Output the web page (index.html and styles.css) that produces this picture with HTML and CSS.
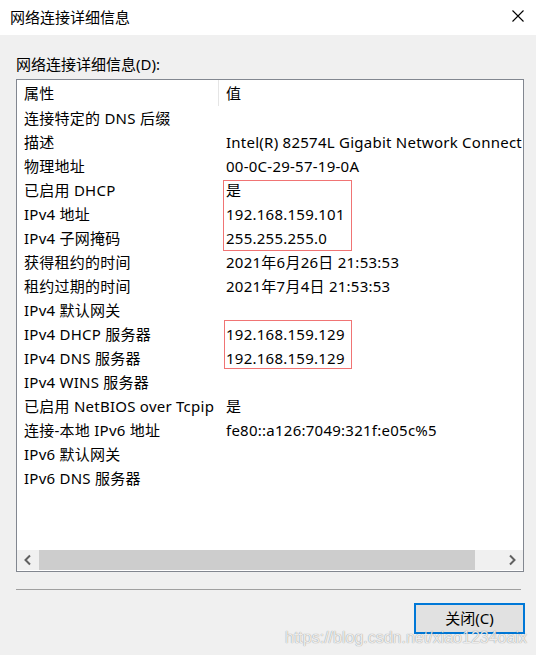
FILE: index.html
```html
<!DOCTYPE html>
<html lang="zh-CN">
<head>
<meta charset="utf-8">
<title>网络连接详细信息</title>
<link rel="stylesheet" href="styles.css">
</head>
<body>
<div class="window">
  <div class="titlebar">
    <span class="title">网络连接详细信息</span>
    <svg class="close" width="12" height="12" viewBox="0 0 12 12"><path d="M0.5 0.5 L11.5 11.5 M11.5 0.5 L0.5 11.5" stroke="#000" stroke-width="1.1" fill="none"/></svg>
  </div>
  <div class="content">
    <div class="label">网络连接详细信息(D):</div>
    <div class="listview">
      <div class="list">
        <div class="row header"><div class="c1">属性</div><div class="c2">值</div></div>
        <div class="row"><div class="c1">连接特定的 DNS 后缀</div><div class="c2"></div></div>
        <div class="row"><div class="c1">描述</div><div class="c2">Intel(R) 82574L Gigabit Network Connect</div></div>
        <div class="row"><div class="c1">物理地址</div><div class="c2">00-0C-29-57-19-0A</div></div>
        <div class="row"><div class="c1">已启用 DHCP</div><div class="c2">是</div></div>
        <div class="row"><div class="c1">IPv4 地址</div><div class="c2">192.168.159.101</div></div>
        <div class="row"><div class="c1">IPv4 子网掩码</div><div class="c2">255.255.255.0</div></div>
        <div class="row"><div class="c1">获得租约的时间</div><div class="c2">2021年6月26日 21:53:53</div></div>
        <div class="row"><div class="c1">租约过期的时间</div><div class="c2">2021年7月4日 21:53:53</div></div>
        <div class="row"><div class="c1">IPv4 默认网关</div><div class="c2"></div></div>
        <div class="row"><div class="c1">IPv4 DHCP 服务器</div><div class="c2">192.168.159.129</div></div>
        <div class="row"><div class="c1">IPv4 DNS 服务器</div><div class="c2">192.168.159.129</div></div>
        <div class="row"><div class="c1">IPv4 WINS 服务器</div><div class="c2"></div></div>
        <div class="row"><div class="c1">已启用 NetBIOS over Tcpip</div><div class="c2">是</div></div>
        <div class="row"><div class="c1">连接-本地 IPv6 地址</div><div class="c2">fe80::a126:7049:321f:e05c%5</div></div>
        <div class="row"><div class="c1">IPv6 默认网关</div><div class="c2"></div></div>
        <div class="row"><div class="c1">IPv6 DNS 服务器</div><div class="c2"></div></div>
      </div>
      <div class="hscroll">
        <div class="sbtn"><svg width="10" height="12" viewBox="0 0 10 12"><path d="M7 1.5 L2.5 6 L7 10.5" stroke="#606060" stroke-width="2" fill="none"/></svg></div>
        <div class="thumb"></div>
        <div class="track"></div>
        <div class="sbtn"><svg width="10" height="12" viewBox="0 0 10 12"><path d="M3 1.5 L7.5 6 L3 10.5" stroke="#606060" stroke-width="2" fill="none"/></svg></div>
      </div>
      <div class="mark mark1"></div>
      <div class="mark mark2"></div>
    </div>
    <div class="sep"></div>
    <div class="buttons"><button class="btn">关闭(C)</button></div>
  </div>
  <div class="watermark">https://blog.csdn.net/xiao1234oaix</div>
</div>
</body>
</html>
```

FILE: styles.css
```css
html, body {
  margin: 0;
  padding: 0;
  background: #f0f0f0;
}
.window {
  position: relative;
  width: 536px;
  height: 655px;
  background: #f0f0f0;
  font-family: "Noto Sans", "Noto Sans CJK SC", sans-serif;
  font-size: 15px;
  color: #000;
  overflow: hidden;
}
.titlebar {
  height: 35px;
  background: #fff;
  display: flex;
  align-items: center;
  justify-content: space-between;
  padding: 0 12px 0 10px;
  box-sizing: border-box;
}
.title {
  font-size: 15px;
  line-height: 20px;
  margin-top: -2px;
}
.close {
  display: block;
  margin-top: -3px;
}
.content {
  padding: 19px 12px 0 16px;
}
.label {
  line-height: 20px;
  height: 20px;
  margin-bottom: 5px;
}
.listview {
  position: relative;
  height: 493px;
  box-sizing: border-box;
  border: 1px solid #828790;
  background: #fff;
  display: flex;
  flex-direction: column;
  overflow: hidden;
}
.list {
  flex: 1;
  overflow: hidden;
  letter-spacing: 0.25px;
}
.row {
  display: flex;
  height: 24px;
  line-height: 24px;
  white-space: nowrap;
}
.row.header {
  height: 26px;
  line-height: 26px;
}
.c1 {
  width: 194px;
  flex: none;
  padding-left: 7px;
}
.c2 {
  padding-left: 8px;
  flex: none;
}
.header .c2 {
  border-left: 1px solid #e5e5e5;
  padding-left: 7px;
}
.hscroll {
  height: 20px;
  flex: none;
  display: flex;
  background: #f0f0f0;
  margin-bottom: 1px;
}
.sbtn {
  width: 22px;
  flex: none;
  display: flex;
  align-items: center;
  justify-content: center;
}
.thumb {
  width: 436px;
  flex: none;
  background: #cdcdcd;
}
.track {
  flex: 1;
}
.mark {
  position: absolute;
  border: 1px solid #f07474;
  box-sizing: border-box;
}
.mark1 {
  left: 206px;
  top: 100px;
  width: 129px;
  height: 71px;
}
.mark2 {
  left: 207px;
  top: 240px;
  width: 128px;
  height: 49px;
}
.sep {
  height: 1px;
  background: #a0a0a0;
  margin: 17px 3px 0 0;
}
.buttons {
  display: flex;
  justify-content: flex-end;
  margin-top: 13px;
  margin-right: -1px;
}
.btn {
  width: 111px;
  height: 31px;
  box-sizing: border-box;
  border: 2px solid #0078d7;
  background: #e1e1e1;
  font-family: "Noto Sans", "Noto Sans CJK SC", sans-serif;
  font-size: 15px;
  color: #000;
  padding: 0;
  line-height: 27px;
}
.watermark {
  position: absolute;
  left: 285px;
  top: 628px;
  font-family: "Liberation Sans", Arial, sans-serif;
  font-size: 16px;
  line-height: 20px;
  color: rgba(255, 255, 255, 0.85);
  text-shadow: 0 0 1px rgba(0, 0, 0, 0.35), 0 0 1px rgba(0, 0, 0, 0.2);
  white-space: nowrap;
}
```
